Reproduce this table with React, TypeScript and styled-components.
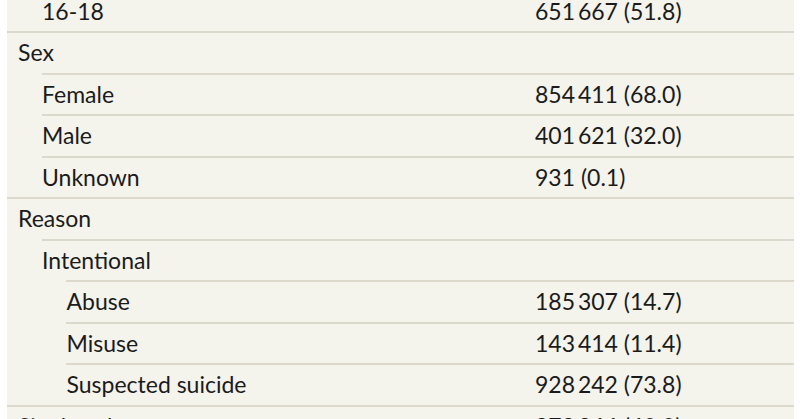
import React from 'react';
import styled, {createGlobalStyle} from "styled-components";

const GlobalStyle = createGlobalStyle`
  html, body {
    margin: 0;
    padding: 0;
    background: #ffffff;
  }
  body {
    overflow: hidden;
    font-family: Lato, "Liberation Sans", sans-serif;
  }
`

type RowProps = {
    level: number
}

const Page = styled.div`
  width: 800px;
  height: 419px;
  overflow: hidden;
`

const Table = styled.div`
  margin: -10.5px 0 0 7px;
  width: 787px;
  background-color: #f4f3ec;
`

const Row = styled.div<RowProps>`
  display: grid;
  grid-template-columns: 1fr 259px;
  box-sizing: border-box;
  height: 41.5px;
  margin-left: ${props => props.level === 0 ? 0 : 34.5 + (props.level - 1) * 24.5}px;
  border-top: 2px solid #dcd8cb;
  color: #1b1b1b;
  font-size: 23px;
  line-height: 39.5px;
`

const Label = styled.div<RowProps>`
  padding-left: ${props => props.level === 0 ? 11 : 0.5}px;
  white-space: nowrap;
`

const Value = styled.div`
  white-space: nowrap;
`

const rows = [
    {label: '16-18', level: 1, value: '651\u2009667 (51.8)'},
    {label: 'Sex', level: 0, value: ''},
    {label: 'Female', level: 1, value: '854\u2009411 (68.0)'},
    {label: 'Male', level: 1, value: '401\u2009621 (32.0)'},
    {label: 'Unknown', level: 1, value: '931 (0.1)'},
    {label: 'Reason', level: 0, value: ''},
    {label: 'Intentional', level: 1, value: ''},
    {label: 'Abuse', level: 2, value: '185\u2009307 (14.7)'},
    {label: 'Misuse', level: 2, value: '143\u2009414 (11.4)'},
    {label: 'Suspected suicide', level: 2, value: '928\u2009242 (73.8)'},
    {label: 'Single substance', level: 0, value: '878\u2009266 (69.9)'},
]

const App = () => {
    return (
        <Page>
            <GlobalStyle/>
            <Table>
                {rows.map((r, i) => (
                    <Row key={i} level={r.level}>
                        <Label level={r.level}>{r.label}</Label>
                        <Value>{r.value}</Value>
                    </Row>
                ))}
            </Table>
        </Page>
    );
};

export default App;
